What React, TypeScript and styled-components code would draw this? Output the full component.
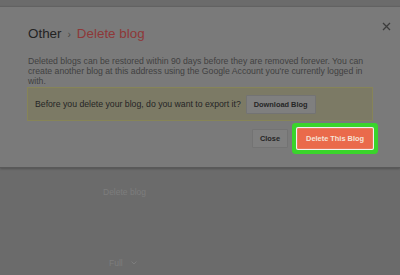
import styled, { createGlobalStyle } from "styled-components";

const Global = createGlobalStyle`
  html, body { margin: 0; padding: 0; background: #6a6a6a; }
  body { font-family: "Liberation Sans", Arial, sans-serif; }
`;

const Page = styled.div`
  width: 400px;
  height: 275px;
  overflow: hidden;
  padding-top: 6px;
  box-sizing: border-box;
  background: #6b6b6b;
`;

const Dialog = styled.div`
  position: relative;
  height: 162px;
  box-sizing: border-box;
  background: #7a7a7a;
  border-top: 1px solid #626262;
  border-bottom: 1px solid #595959;
  box-shadow: 0 1px 2px rgba(0, 0, 0, 0.25);
  padding: 19px 27px 0 27px;
`;

const CloseX = styled.button`
  position: absolute;
  top: 13px;
  right: 8px;
  width: 12px;
  height: 12px;
  padding: 0;
  border: 0;
  background: none;
  display: flex;
  align-items: center;
  justify-content: center;
`;

const Title = styled.h1`
  margin: 0;
  font-size: 13.4px;
  line-height: 16px;
  font-weight: normal;
  color: #232323;
  display: flex;
  align-items: baseline;
  gap: 6px;
  padding-left: 1px;
`;

const Sep = styled.span`
  color: #474747;
  font-size: 10px;
`;

const Crumb = styled.span`
  color: #8e3838;
`;

const Text = styled.p`
  margin: 13px 0 0 1px;
  font-size: 8.7px;
  line-height: 10px;
  color: #414141;
  white-space: nowrap;
`;

const Notice = styled.div`
  margin-top: 1px;
  height: 34px;
  box-sizing: border-box;
  background: #7c7a65;
  border: 1px solid #868458;
  display: flex;
  align-items: center;
  padding: 0 7px;
  gap: 5px;
  font-size: 8.7px;
  color: #252525;
`;

const Btn = styled.button<{ $primary?: boolean }>`
  font-family: "Liberation Sans", Arial, sans-serif;
  font-size: 7.4px;
  font-weight: bold;
  height: ${({ $primary }) => ($primary ? "21px" : "19px")};
  padding: 0 ${({ $primary }) => ($primary ? "8px" : "7px")};
  border-radius: 1px;
  border: 1px solid ${({ $primary }) => ($primary ? "#ec7a5c" : "#737373")};
  background: ${({ $primary }) => ($primary ? "#ea6a4b" : "#7f7f7f")};
  color: ${({ $primary }) => ($primary ? "#f6e2d8" : "#262626")};
  box-shadow: ${({ $primary }) =>
    $primary ? "0 0 0 1px #f2f2f2, 0 0 0 5px #3ad42b" : "none"};
`;

const Actions = styled.div`
  margin-top: 7px;
  display: flex;
  justify-content: flex-end;
  align-items: center;
  gap: 9px;
`;

const Lower = styled.div`
  padding: 19px 0 0 103px;
  display: flex;
  flex-direction: column;
`;

const Faint = styled.div<{ $indent?: number }>`
  font-size: 8.5px;
  color: #7d7d7d;
  margin-left: ${({ $indent }) => $indent ?? 0}px;
  display: flex;
  align-items: center;
  gap: 8px;
`;

const Spacer = styled.div`
  height: 61px;
`;

export default function App() {
  return (
    <>
      <Global />
      <Page>
        <Dialog>
          <CloseX aria-label="Close">
            <svg width="9" height="9" viewBox="0 0 9 9">
              <path d="M1 1L8 8M8 1L1 8" stroke="#3c3c3c" strokeWidth="1.3" />
            </svg>
          </CloseX>
          <Title>
            Other <Sep>›</Sep> <Crumb>Delete blog</Crumb>
          </Title>
          <Text>
            Deleted blogs can be restored within 90 days before they are removed forever. You can
            <br />
            create another blog at this address using the Google Account you're currently logged in
            <br />
            with.
          </Text>
          <Notice>
            Before you delete your blog, do you want to export it?
            <Btn>Download Blog</Btn>
          </Notice>
          <Actions>
            <Btn>Close</Btn>
            <Btn $primary>Delete This Blog</Btn>
          </Actions>
        </Dialog>
        <Lower>
          <Faint>Delete blog</Faint>
          <Spacer />
          <Faint $indent={6}>
            Full
            <svg width="6" height="4" viewBox="0 0 6 4">
              <path d="M0.5 0.5L3 3L5.5 0.5" stroke="#7d7d7d" fill="none" />
            </svg>
          </Faint>
        </Lower>
      </Page>
    </>
  );
}
